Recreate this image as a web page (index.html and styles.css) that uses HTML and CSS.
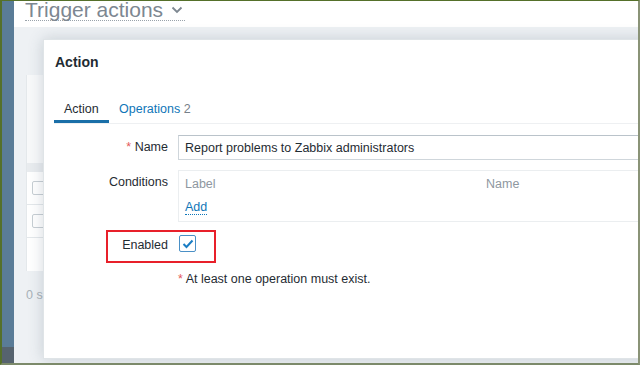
FILE: index.html
```html
<!DOCTYPE html>
<html lang="en">
<head>
    <meta charset="UTF-8">
    <title>Trigger actions</title>
    <link rel="stylesheet" href="styles.css">
</head>
<body>
    <div class="frame">
        <!-- Left navigation strip -->
        <div class="sidebar">
            <div class="sidebar-foot"></div>
        </div>

        <!-- Page behind the dialog -->
        <div class="page">
            <div class="page-header">
                <h1 class="page-title">Trigger actions
                    <svg class="chevron" width="12" height="8" viewBox="0 0 12 8"><path d="M1.5 1.5 L6 6 L10.5 1.5" fill="none" stroke="#7d8791" stroke-width="1.8"/></svg>
                </h1>
            </div>
            <div class="page-body">
                <div class="list-panel">
                    <div class="list-top"></div>
                    <div class="list-head"></div>
                    <div class="list-row"><span class="list-check"></span></div>
                    <div class="list-row"><span class="list-check"></span></div>
                    <div class="list-row"></div>
                </div>
                <div class="list-footer">0 s</div>
            </div>
        </div>

        <!-- Action dialog -->
        <div class="dialog">
            <div class="dialog-title">Action</div>
            <div class="tabs">
                <span class="tab active">Action</span>
                <span class="tab link">Operations <span class="count">2</span></span>
            </div>
            <div class="form">
                <div class="form-row">
                    <label class="form-label"><span class="req">*</span> Name</label>
                    <div class="form-field">
                        <div class="text-input">Report problems to Zabbix administrators</div>
                    </div>
                </div>
                <div class="form-row">
                    <label class="form-label">Conditions</label>
                    <div class="form-field">
                        <div class="conditions">
                            <div class="cond-head">
                                <span class="cond-label">Label</span>
                                <span class="cond-name">Name</span>
                            </div>
                            <a class="add-link">Add</a>
                        </div>
                    </div>
                </div>
                <div class="form-row enabled-row">
                    <label class="form-label">Enabled</label>
                    <div class="form-field">
                        <span class="checkbox">
                            <svg width="12" height="10" viewBox="0 0 12 10"><path d="M1.5 5 L4.5 8 L10.5 1.5" fill="none" stroke="#1a7dc4" stroke-width="2"/></svg>
                        </span>
                    </div>
                    <div class="highlight"></div>
                </div>
                <div class="form-row">
                    <span class="form-label"></span>
                    <div class="form-field note"><span class="req">*</span> At least one operation must exist.</div>
                </div>
            </div>
        </div>
    </div>
</body>
</html>
```

FILE: styles.css
```css
/* Reset */
* {
    margin: 0;
    padding: 0;
    box-sizing: border-box;
}

body {
    width: 640px;
    height: 365px;
    overflow: hidden;
    font-family: 'Liberation Sans', Arial, sans-serif;
    font-size: 12.5px;
    color: #1f2c33;
    background: #5b6f31;
}

/* Outer screenshot frame */
.frame {
    position: relative;
    display: flex;
    width: 640px;
    height: 365px;
    border-top: 1px solid #55702a;
    border-left: 2px solid #55702a;
    border-right: 2px solid #8a9377;
    border-bottom: 2px solid #7c8a6a;
    overflow: hidden;
}

/* Sidebar */
.sidebar {
    width: 12px;
    background: #5a7c97;
    display: flex;
    flex-direction: column;
    justify-content: flex-end;
}

.sidebar-foot {
    height: 16px;
    background: #56636e;
}

/* Page behind the dialog */
.page {
    flex: 1;
    display: flex;
    flex-direction: column;
    background: #eef1f4;
}

.page-header {
    height: 26px;
    background: #ffffff;
    padding-left: 11px;
}

.page-title {
    display: inline-flex;
    align-items: center;
    gap: 8px;
    font-weight: normal;
    font-size: 21px;
    line-height: 20px;
    margin-top: -1px;
    color: #7d8791;
    border-bottom: 1px dotted #9aa3ab;
    padding-right: 2px;
}

.page-body {
    flex: 1;
    padding: 48px 0 0 12px;
}

.list-panel {
    width: 40px;
    background: #ffffff;
    border-left: 1px solid #e4e8eb;
}

.list-top {
    height: 88px;
    background: #f8f9fa;
}

.list-head {
    height: 9px;
    background: #e9ecef;
}

.list-row {
    height: 33px;
    border-bottom: 1px solid #e4e8eb;
    display: flex;
    align-items: center;
    padding-left: 5px;
}

.list-row:last-child {
    border-bottom: none;
}

.list-check {
    width: 14px;
    height: 14px;
    border: 1px solid #c8cfd4;
    border-radius: 2px;
    background: #ffffff;
}

.list-footer {
    margin-top: 17px;
    color: #a9b1b8;
    font-size: 12.5px;
}

/* Dialog */
.dialog {
    position: absolute;
    left: 41px;
    top: 38px;
    width: 640px;
    height: 320px;
    background: #ffffff;
    border: 1px solid #dfe4e7;
    box-shadow: 0 0 14px rgba(60, 80, 100, 0.22);
    padding: 0 0 0 10px;
}

.dialog-title {
    font-size: 14px;
    font-weight: bold;
    color: #1f2c33;
    padding: 14px 0 0 1px;
    height: 58px;
}

.tabs {
    display: flex;
    border-bottom: 1px solid #eef0f2;
    height: 26px;
}

.tab {
    padding: 4px 10px 0;
}

.tab.active {
    border-bottom: 3px solid #1a6fa8;
    width: 55px;
    padding-left: 10px;
}

.tab.link {
    color: #0f76b8;
}

.count {
    color: #768089;
}

/* Form */
.form {
    padding-top: 11px;
}

.form-row {
    position: relative;
    display: flex;
    align-items: flex-start;
    margin-bottom: 10px;
}

.form-label {
    width: 124px;
    text-align: right;
    padding: 5px 10px 0 0;
    color: #1f2c33;
}

.req {
    color: #e45959;
}

.form-field {
    flex: 1;
}

.text-input {
    height: 25px;
    border: 1px solid #cfd6db;
    border-top-color: #bac3ca;
    padding: 5px 6px 0;
}

.conditions {
    height: 52px;
    border: 1px solid #ebeef0;
    padding: 6px 6px 0;
}

.cond-head {
    display: flex;
    color: #8e979f;
}

.cond-label {
    width: 301px;
}

.add-link {
    display: inline-block;
    margin-top: 9px;
    color: #0f76b8;
    border-bottom: 1px dotted #0f76b8;
    line-height: 14px;
}

.enabled-row {
    margin-top: 13px;
    margin-bottom: 20px;
}

.enabled-row .form-label {
    padding-top: 3px;
}

.checkbox {
    display: flex;
    align-items: center;
    justify-content: center;
    width: 17px;
    height: 17px;
    margin-left: 1px;
    border: 1px solid #4a90c6;
    border-radius: 2px;
}

/* Red callout around the Enabled option */
.highlight {
    position: absolute;
    left: 52px;
    top: -5px;
    width: 110px;
    height: 33px;
    border: 2px solid #e8202a;
}

.note {
    padding-top: 0;
    color: #1f2c33;
}
```
